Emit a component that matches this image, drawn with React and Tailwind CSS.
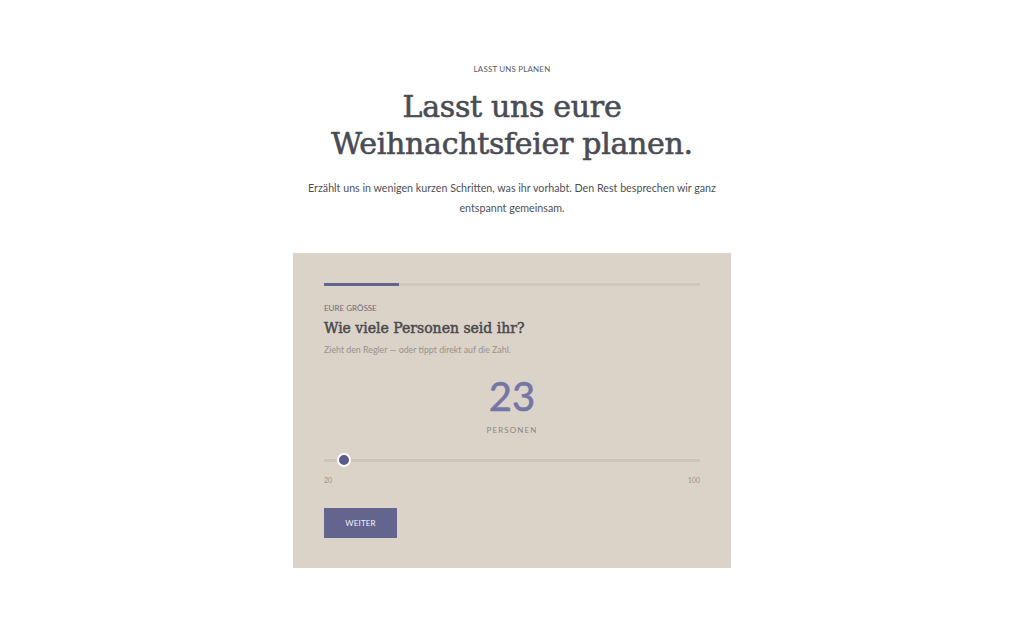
import React from 'react';

const App = () => {
  return (
    <div className="min-h-[629px] bg-white flex flex-col items-center pt-[63px] font-['Lato',_'Open_Sans',_sans-serif] text-[#4a4a52]">
      <p className="text-[8px] tracking-[0.02em] uppercase text-[#5a5a62] leading-[12px]">Lasst uns planen</p>

      <h1 className="mt-[13px] text-center text-[30px] leading-[37px] text-[#4a4b53] tracking-[-0.01em] font-['DejaVu_Serif',_serif] [-webkit-text-stroke:0.6px_#4a4b53]">
        Lasst uns eure
        <br />
        Weihnachtsfeier planen.
      </h1>

      <p className="mt-[16px] w-[424px] text-center text-[10.7px] leading-[20px] text-[#4f4f55]">
        Erzählt uns in wenigen kurzen Schritten, was ihr vorhabt. Den Rest besprechen wir ganz entspannt gemeinsam.
      </p>

      <div className="mt-[35px] w-[438px] h-[315px] bg-[#dbd3c8] px-[31px] pt-[30px]">
        {/* progress */}
        <div className="h-[3px] bg-[#d0c6bb]">
          <div className="h-[3px] w-[75px] bg-[#62638e]" />
        </div>

        <p className="mt-[16px] text-[8px] uppercase text-[#6e6a78] leading-[12px]">Eure Grösse</p>
        <h2 className="mt-[4px] text-[14px] leading-[20px] text-[#4a4a4f] font-['DejaVu_Serif',_serif] [-webkit-text-stroke:0.5px_#4a4a4f]">Wie viele Personen seid ihr?</h2>
        <p className="mt-[6px] text-[8.8px] text-[#9a9189] leading-[12px]">Zieht den Regler — oder tippt direkt auf die Zahl.</p>

        <div className="mt-[17px] flex flex-col items-center">
          <span className="text-[40px] leading-[46px] text-[#7476a6] [-webkit-text-stroke:0.6px_#7476a6]">23</span>
          <span className="mt-[5px] text-[8px] tracking-[0.14em] uppercase text-[#8c8580] leading-[12px]">Personen</span>
        </div>

        {/* slider */}
        <div className="mt-[17px] relative h-[14px] flex items-center">
          <div className="w-full h-[3px] bg-[#cec4b9] rounded-full" />
          <div className="absolute left-[13px] top-0 w-[14px] h-[14px] rounded-full bg-[#5a5b8a] border-2 border-white" />
        </div>
        <div className="mt-[8px] flex justify-between text-[7px] text-[#9a928b] leading-[10px]">
          <span>20</span>
          <span>100</span>
        </div>

        <button className="mt-[23px] w-[73px] h-[30px] bg-[#63658f] text-[#f4f2f7] text-[8px] uppercase tracking-[0.02em]">
          Weiter
        </button>
      </div>
    </div>
  );
};

export default App;
